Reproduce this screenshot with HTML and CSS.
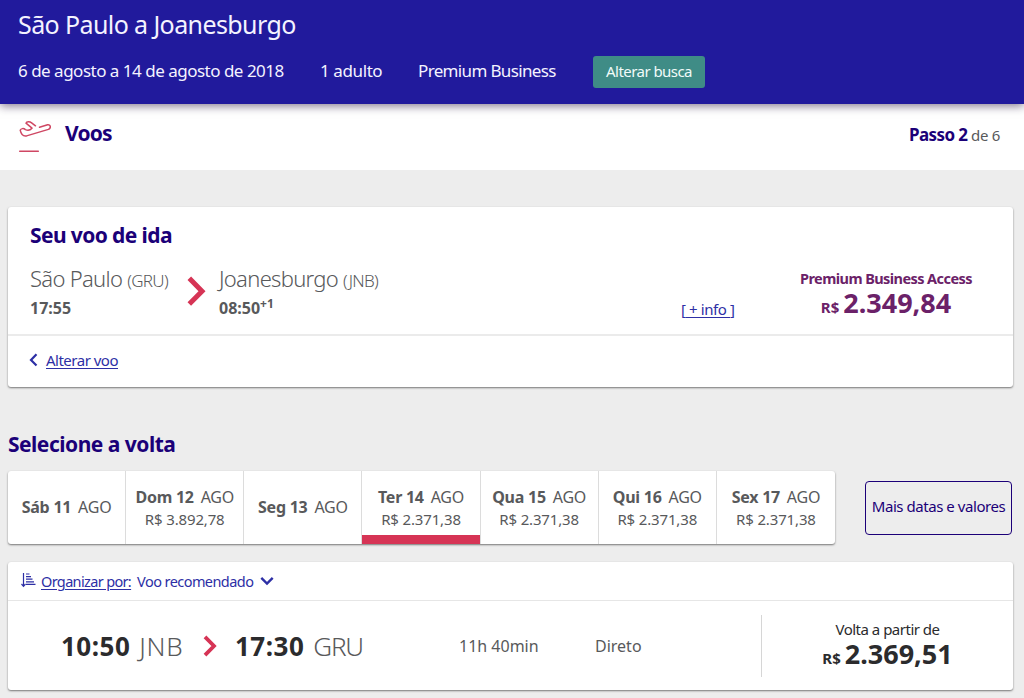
FILE: index.html
```html
<!DOCTYPE html>
<html lang="pt-BR">
<head>
  <meta charset="UTF-8">
  <title>São Paulo a Joanesburgo</title>
  <link rel="stylesheet" href="styles.css">
</head>
<body>
  <header class="search-header">
    <h1 class="route-title">São Paulo a Joanesburgo</h1>
    <div class="search-info">
      <span class="info-dates">6 de agosto a 14 de agosto de 2018</span>
      <span class="info-pax">1 adulto</span>
      <span class="info-cabin">Premium Business</span>
      <button class="change-search">Alterar busca</button>
    </div>
  </header>

  <div class="step-bar">
    <svg class="plane-icon" width="34" height="34" viewBox="0 0 34 34">
      <path d="M17.5 5.8 L13.6 2.8 C11.8 1.4 8.6 1.4 8 3.2 L14 8.2 C12.4 10 9.8 10.6 7.4 9.6 C5.6 8 3 8.4 2.2 10.2 C3 13.8 5.2 16.6 8.6 15.9 L30.4 9.4 C33.4 8 32.6 4.2 29.6 4.8 L21.5 7.2" />
      <path d="M1.7 31.2 H20.3" />
    </svg>
    <h2 class="step-title">Voos</h2>
    <p class="step-count"><strong>Passo 2</strong> de 6</p>
  </div>

  <main class="content">
    <section class="card outbound">
      <div class="outbound-body">
        <h2 class="outbound-title">Seu voo de ida</h2>
        <div class="outbound-row">
          <div class="place place-from">
            <div class="city">São Paulo <small>(GRU)</small></div>
            <div class="hour">17:55</div>
          </div>
          <svg class="arrow-big" width="20" height="32" viewBox="0 0 20 32">
            <path d="M2.3 3.3 L15 16.3 L2.3 29" />
          </svg>
          <div class="place place-to">
            <div class="city">Joanesburgo <small>(JNB)</small></div>
            <div class="hour">08:50<sup>+1</sup></div>
          </div>
          <a class="more-info">[<span>&nbsp;+ info&nbsp;</span>]</a>
          <div class="fare">
            <div class="fare-name">Premium Business Access</div>
            <div class="fare-price"><small>R$</small><span>2.349,84</span></div>
          </div>
        </div>
      </div>
      <div class="outbound-footer">
        <svg width="9" height="14" viewBox="0 0 9 14">
          <path d="M7.5 1.3 L2 7 L7.5 12.5" />
        </svg>
        <a class="change-flight">Alterar voo</a>
      </div>
    </section>

    <h2 class="return-title">Selecione a volta</h2>

    <div class="dates-row">
      <ul class="dates">
        <li><div class="day"><strong>Sáb 11</strong> AGO</div></li>
        <li><div class="day"><strong>Dom 12</strong> AGO</div><div class="day-price">R$ 3.892,78</div></li>
        <li><div class="day"><strong>Seg 13</strong> AGO</div></li>
        <li class="selected"><div class="day"><strong>Ter 14</strong> AGO</div><div class="day-price">R$ 2.371,38</div></li>
        <li><div class="day"><strong>Qua 15</strong> AGO</div><div class="day-price">R$ 2.371,38</div></li>
        <li><div class="day"><strong>Qui 16</strong> AGO</div><div class="day-price">R$ 2.371,38</div></li>
        <li><div class="day"><strong>Sex 17</strong> AGO</div><div class="day-price">R$ 2.371,38</div></li>
      </ul>
      <button class="more-dates">Mais datas e valores</button>
    </div>

    <section class="card results">
      <div class="sort-bar">
        <svg class="sort-icon" width="15" height="16" viewBox="0 0 15 16">
          <path d="M2.5 1 V14 M0.5 12 L2.5 14.3 L4.5 12" />
          <path d="M5 2 H8.5 M5 4.6 H10 M5 7.2 H11.5 M5 9.8 H13 M5 12.4 H14.5" />
        </svg>
        <a class="sort-label">Organizar por:</a>
        <span class="sort-value">Voo recomendado</span>
        <svg class="sort-caret" width="14" height="10" viewBox="0 0 14 10">
          <path d="M1.3 1.8 L7 7.5 L12.7 1.8" />
        </svg>
      </div>
      <div class="flight">
        <div class="flight-point flight-from"><strong>10:50</strong><span>JNB</span></div>
        <svg class="arrow-small" width="15" height="22" viewBox="0 0 15 22">
          <path d="M2 1.8 L11 11 L2 20.2" />
        </svg>
        <div class="flight-point flight-to"><strong>17:30</strong><span>GRU</span></div>
        <div class="duration">11h 40min</div>
        <div class="stops">Direto</div>
        <div class="flight-price">
          <div class="from-label">Volta a partir de</div>
          <div class="fare-price"><small>R$</small><span>2.369,51</span></div>
        </div>
      </div>
    </section>
  </main>
</body>
</html>
```

FILE: styles.css
```css
:root {
  --blue: #211a9c;
  --navy: #1b0078;
  --link: #2d2fa5;
  --red: #d63455;
  --purple: #6b2168;
  --gray: #58595b;
  --dark: #2b2b2d;
  --bg: #ededed;
}

* {
  box-sizing: border-box;
}

body {
  margin: 0;
  height: 698px;
  overflow: hidden;
  background: var(--bg);
  color: var(--gray);
  font-family: "Noto Sans", sans-serif;
  font-size: 15px;
  white-space: nowrap;
}

h1, h2, p, ul {
  margin: 0;
  padding: 0;
}

svg {
  flex: none;
  fill: none;
}

button {
  padding: 0;
  font-family: inherit;
}

/* header */
.search-header {
  position: relative;
  height: 104px;
  padding: 6px 18px 0;
  background: var(--blue);
  color: #f4f3ff;
  box-shadow: 0 2px 9px rgba(30, 10, 50, 0.55);
}

.route-title {
  font-size: 25px;
  font-weight: 400;
  line-height: 36px;
  letter-spacing: -0.6px;
}

.search-info {
  display: flex;
  align-items: center;
  height: 32px;
  margin-top: 14px;
  font-size: 17px;
  line-height: 30px;
}

.search-info span {
  padding-bottom: 2px;
}

.info-dates {
  width: 302px;
  letter-spacing: -0.5px;
}

.info-pax {
  width: 98px;
  letter-spacing: -0.4px;
}

.info-cabin {
  width: 175px;
  letter-spacing: -0.65px;
}

.change-search {
  width: 112px;
  height: 32px;
  padding-bottom: 2px;
  border: 0;
  border-radius: 3px;
  background: #3f8c86;
  color: #f1fbf9;
  font-size: 15px;
  letter-spacing: -0.55px;
}

/* step bar */
.step-bar {
  display: flex;
  height: 66px;
  padding: 0 24px 0 18px;
  background: #fff;
}

.plane-icon {
  margin-top: 16px;
  stroke: #cf4763;
  stroke-width: 1.5;
  stroke-linejoin: round;
  stroke-linecap: round;
}

.step-title {
  margin-left: 13px;
  color: var(--navy);
  font-size: 21px;
  line-height: 58px;
  letter-spacing: -0.8px;
}

.step-count {
  margin-left: auto;
  font-size: 15px;
  line-height: 62px;
  letter-spacing: -0.3px;
}

.step-count strong {
  color: var(--navy);
  font-size: 17px;
  letter-spacing: -0.6px;
}

/* cards */
.content {
  padding: 37px 11px 0 8px;
}

.card {
  background: #fff;
  border-radius: 3px;
  box-shadow: 0 1px 2px rgba(0, 0, 0, 0.5);
}

.outbound {
  height: 180px;
}

.outbound-body {
  height: 129px;
  padding: 13px 0 0 22px;
  border-bottom: 2px solid #ebebeb;
}

.outbound-title {
  color: var(--navy);
  font-size: 21px;
  line-height: 30px;
  letter-spacing: -0.6px;
}

.outbound-row {
  display: flex;
}

.outbound-row > * {
  flex: none;
}

.place {
  padding-top: 13px;
}

.place-from {
  width: 157px;
}

.place-to {
  width: 442px;
  margin-left: 12px;
}

.city {
  font-size: 22px;
  font-weight: 300;
  line-height: 30px;
  letter-spacing: -0.7px;
}

.city small {
  font-size: 17px;
}

.hour {
  font-size: 16px;
  font-weight: 700;
  line-height: 24px;
}

.hour sup {
  font-size: 12px;
  line-height: 0;
}

.arrow-big {
  margin-top: 25px;
  stroke: var(--red);
  stroke-width: 5;
}

.more-info {
  width: 105px;
  margin-top: 45px;
  margin-left: 20px;
  color: var(--link);
  line-height: 28px;
  letter-spacing: -0.4px;
}

.more-info span,
.change-flight,
.sort-label {
  text-decoration: underline;
  text-underline-offset: 2px;
}

.fare {
  width: 200px;
  padding-top: 18px;
  color: var(--purple);
  text-align: center;
}

.fare-name {
  font-size: 14.5px;
  font-weight: 700;
  line-height: 21px;
  letter-spacing: -0.57px;
}

.fare-price {
  font-size: 27px;
  font-weight: 700;
  line-height: 28px;
}

.fare-price small {
  margin-right: 4px;
  font-size: 15px;
}

.outbound-footer {
  display: flex;
  align-items: center;
  height: 48px;
  padding-left: 21px;
  color: var(--link);
  letter-spacing: -0.5px;
}

.outbound-footer svg {
  margin-right: 8px;
  stroke: var(--link);
  stroke-width: 2.2;
}

/* return dates */
.return-title {
  margin-top: 42px;
  color: var(--navy);
  font-size: 21px;
  line-height: 30px;
  letter-spacing: -0.5px;
}

.dates-row {
  display: flex;
  justify-content: space-between;
  margin-top: 12px;
  padding-right: 1px;
}

.dates {
  display: grid;
  grid-template-columns: repeat(7, 1fr);
  width: 827px;
  height: 73px;
  background: #fff;
  border-radius: 3px;
  box-shadow: 0 1px 2px rgba(0, 0, 0, 0.5);
  list-style: none;
}

.dates li {
  display: flex;
  flex-direction: column;
  justify-content: center;
  border-right: 1px solid #dcdcdc;
  text-align: center;
}

.dates li:last-child {
  border-right: 0;
}

.dates .selected {
  box-shadow: inset 0 -9px var(--red);
}

.day {
  font-size: 16px;
  line-height: 23px;
  letter-spacing: -0.25px;
}

.day strong {
  margin-right: 3px;
}

.day-price {
  font-size: 15px;
  line-height: 21px;
  letter-spacing: -0.15px;
}

.more-dates {
  width: 147px;
  height: 54px;
  margin-top: 10px;
  padding-bottom: 5px;
  border: 1px solid var(--navy);
  border-radius: 4px;
  background: transparent;
  color: var(--navy);
  font-size: 15px;
  letter-spacing: -0.45px;
}

/* results */
.results {
  height: 128px;
  margin-top: 18px;
}

.sort-bar {
  display: flex;
  align-items: center;
  height: 39px;
  padding-left: 13px;
  border-bottom: 1px solid #e6e6e6;
  color: var(--link);
  font-size: 14.5px;
}

.sort-icon {
  margin-bottom: 3px;
  stroke: var(--link);
  stroke-width: 1.2;
}

.sort-label {
  margin-left: 5px;
  letter-spacing: -0.65px;
}

.sort-value {
  margin-left: 6px;
  letter-spacing: -0.57px;
}

.sort-caret {
  margin-left: 7px;
  stroke: var(--link);
  stroke-width: 2.4;
}

.flight {
  display: flex;
  align-items: center;
  height: 89px;
  padding-left: 53px;
  color: var(--gray);
}

.flight-point {
  font-size: 26px;
  font-weight: 300;
}

.flight-point strong {
  margin-right: 9px;
  color: var(--dark);
  font-weight: 700;
  letter-spacing: 0.5px;
}

.flight-from {
  width: 142px;
}

.flight-from span {
  letter-spacing: 0.7px;
}

.arrow-small {
  stroke: var(--red);
  stroke-width: 3.8;
}

.flight-to {
  width: 224px;
  margin-left: 17px;
}

.flight-to span {
  letter-spacing: -1.2px;
}

.duration {
  width: 136px;
  font-size: 16px;
}

.stops {
  width: 166px;
  font-size: 16px;
}

.flight-price {
  flex: 1;
  height: 62px;
  padding-top: 3px;
  border-left: 1px solid #d6d6d6;
  color: var(--dark);
  text-align: center;
}

.from-label {
  line-height: 22px;
  letter-spacing: -0.5px;
}
```
